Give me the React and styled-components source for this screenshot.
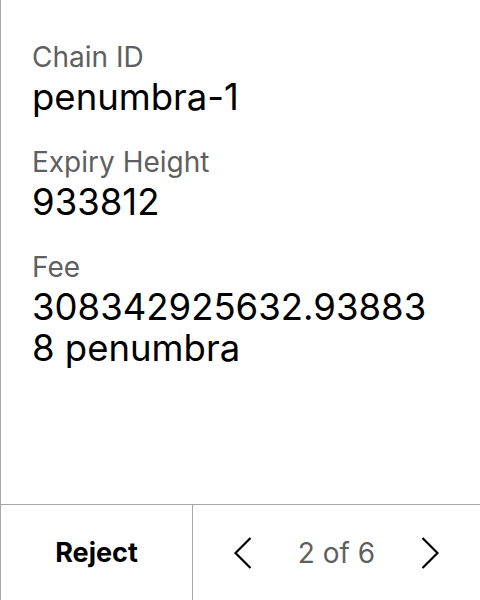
import React from "react";
import styled, { createGlobalStyle } from "styled-components";

const Global = createGlobalStyle`
  html, body { margin: 0; padding: 0; background: #fff; }
  body { font-family: Inter, "Noto Sans", sans-serif; }
`;

const Frame = styled.div`
  box-sizing: border-box;
  width: 480px;
  height: 600px;
  border-left: 1px solid #a8a8a8;
  display: flex;
  flex-direction: column;
  background: #fff;
`;

const Content = styled.div`
  flex: 1;
  padding: 37px 40px 0 31px;
  display: flex;
  flex-direction: column;
  gap: 24px;
`;

const Field = styled.div`
  display: flex;
  flex-direction: column;
`;

const Label = styled.div`
  font-size: 28px;
  line-height: 40px;
  color: #5f5f5f;
`;

const Value = styled.div`
  font-size: 36.5px;
  line-height: 41px;
  color: #000;
  word-break: break-all;
`;

const Footer = styled.div`
  box-sizing: border-box;
  height: 96px;
  border-top: 1px solid #a8a8a8;
  display: grid;
  grid-template-columns: 192px 1fr;
`;

const RejectButton = styled.button`
  border: none;
  border-right: 1px solid #a8a8a8;
  background: transparent;
  font-family: Inter, "Noto Sans", sans-serif;
  font-weight: 700;
  font-size: 27px;
  color: #000;
  padding: 0;
`;

const Pager = styled.div`
  display: flex;
  align-items: center;
  justify-content: center;
  gap: 46px;
`;

const PageText = styled.span`
  font-size: 28px;
  color: #5f5f5f;
`;

const ArrowButton = styled.button`
  border: none;
  background: transparent;
  padding: 0;
  width: 18px;
  height: 32px;
  display: flex;
  align-items: center;
  justify-content: center;
`;

const Chevron = ({ dir }) => (
  <svg width="18" height="32" viewBox="0 0 18 32">
    <polyline
      points={dir === "left" ? "16.5,1 1.5,16 16.5,31" : "1.5,1 16.5,16 1.5,31"}
      fill="none"
      stroke="#000"
      strokeWidth="2.2"
    />
  </svg>
);

const fields = [
  { label: "Chain ID", value: "penumbra-1" },
  { label: "Expiry Height", value: "933812" },
  { label: "Fee", value: "308342925632.938838 penumbra" },
];

export default function App() {
  return (
    <>
      <Global />
      <Frame>
        <Content>
          {fields.map((f) => (
            <Field key={f.label}>
              <Label>{f.label}</Label>
              <Value>{f.value}</Value>
            </Field>
          ))}
        </Content>
        <Footer>
          <RejectButton>Reject</RejectButton>
          <Pager>
            <ArrowButton>
              <Chevron dir="left" />
            </ArrowButton>
            <PageText>2 of 6</PageText>
            <ArrowButton>
              <Chevron dir="right" />
            </ArrowButton>
          </Pager>
        </Footer>
      </Frame>
    </>
  );
}
